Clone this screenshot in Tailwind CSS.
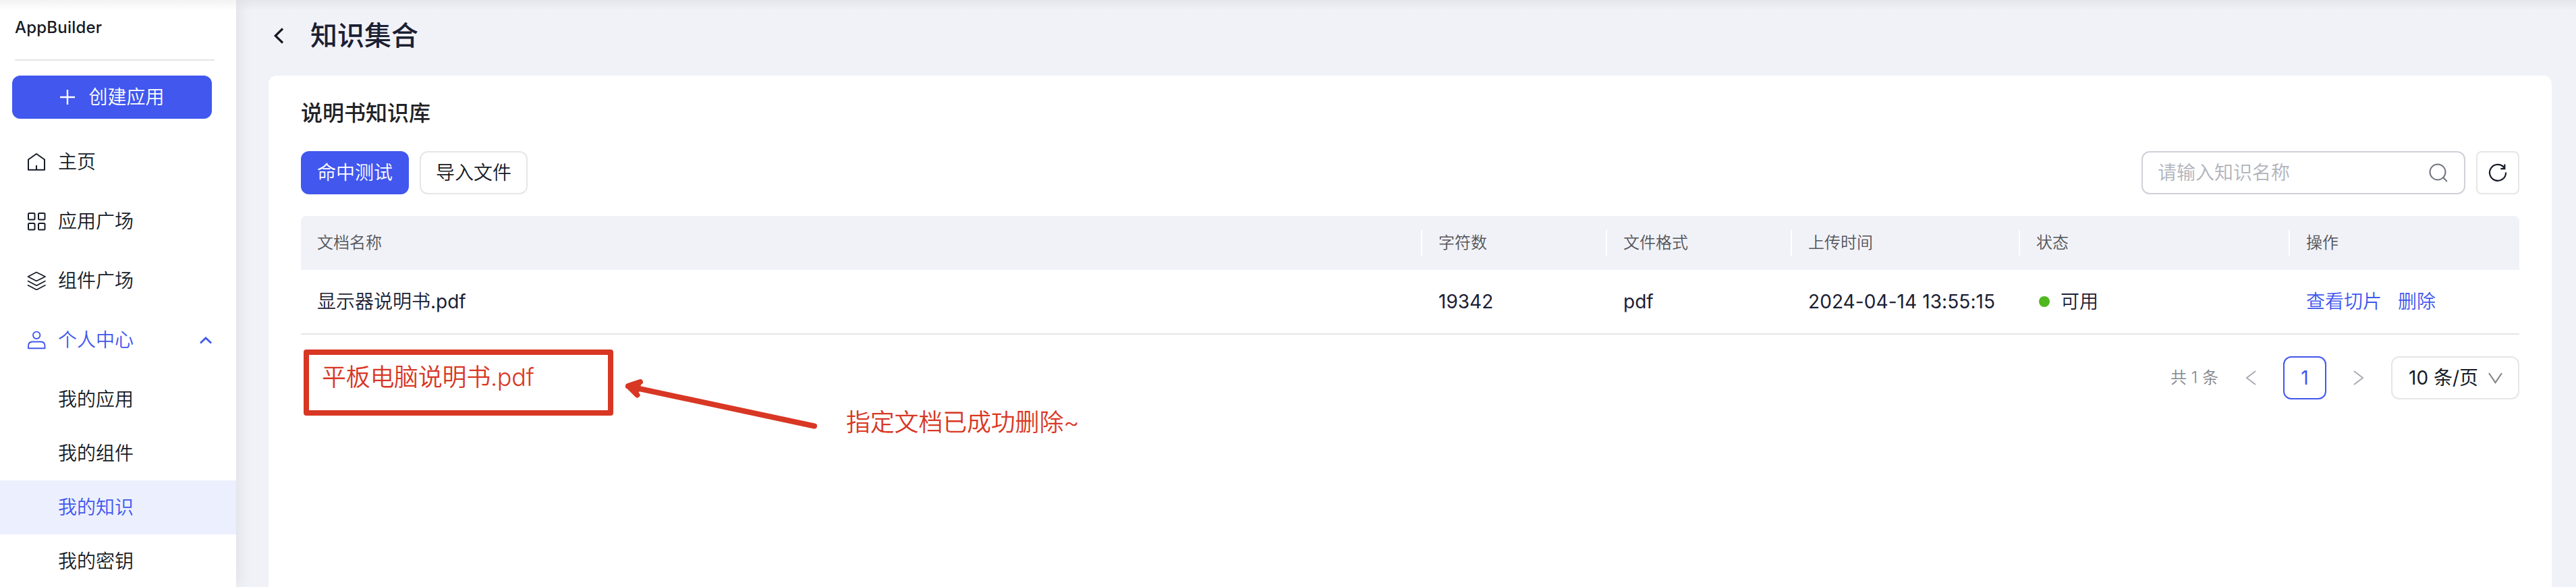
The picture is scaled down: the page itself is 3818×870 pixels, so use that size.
<!DOCTYPE html>
<html lang="zh-CN">
<head>
<meta charset="utf-8">
<title>知识集合 - AppBuilder</title>
<script src="https://cdn.jsdelivr.net/npm/@tailwindcss/browser@4"></script>
</head>
<body class="relative flex h-[870px] w-[3818px] overflow-hidden bg-[#f1f2f8] font-['Inter','Noto_Sans_CJK_SC',sans-serif] text-[28px] leading-none font-[350] text-[#151b26]">

  <!-- Sidebar -->
  <aside class="z-10 flex h-[870px] w-[350px] shrink-0 flex-col overflow-hidden bg-white shadow-[0_0_24px_rgba(0,0,0,0.10)]">
    <div class="ml-[22px] flex h-[90px] w-[296px] shrink-0 items-center border-b-2 border-[#e5e5e5] pb-[6px] text-[24px] font-[450]"><span class="tracking-[0.2px]">AppBuilder</span></div>
    <button class="mt-[22px] ml-[18px] flex h-16 w-[296px] shrink-0 items-center justify-center gap-[19px] rounded-xl bg-[#4157ee] text-white">
      <svg class="size-6" viewBox="0 0 24 24" fill="none" stroke="currentColor" stroke-width="2.4"><path d="M12 1v22M1 12h22"/></svg>
      <span>创建应用</span>
    </button>
    <nav class="mt-5 flex flex-col">
      <a class="flex h-[88px] items-center gap-[18px] pl-10">
        <svg class="size-7" viewBox="0 0 28 28" fill="none" stroke="currentColor" stroke-width="2" stroke-linejoin="round"><path d="M2 10.500 14 2l12 8.500V25.700H2zM14 19v6.500"/></svg>
        <span>主页</span>
      </a>
      <a class="flex h-[88px] items-center gap-[18px] pl-10">
        <svg class="size-7" viewBox="0 0 28 28" fill="none" stroke="currentColor" stroke-width="2"><rect x="2" y="2" width="9.500" height="9.500" rx="1.500"/><rect x="17" y="2" width="9.500" height="9.500" rx="1.500"/><rect x="2" y="17" width="9.500" height="9.500" rx="1.500"/><rect x="17" y="17" width="9.500" height="9.500" rx="1.500"/></svg>
        <span>应用广场</span>
      </a>
      <a class="flex h-[88px] items-center gap-[18px] pl-10">
        <svg class="size-7" viewBox="0 0 28 28" fill="none" stroke="currentColor" stroke-width="1.700" stroke-linejoin="round"><path d="M1.500 8 14 1.500 27 8 14 14.500zM1 14.200l13.200 7L27.500 14.200M1 20.500l13.200 7L27.500 20.500"/></svg>
        <span>组件广场</span>
      </a>
      <a class="flex h-[88px] items-center gap-[18px] pl-10 text-[#4157ee]">
        <svg class="size-7" viewBox="0 0 28 28" fill="none" stroke="currentColor" stroke-width="1.900" stroke-linejoin="round"><circle cx="14.200" cy="6.800" r="5.200"/><path d="M2 26.300V23c0-4.400 2.600-6.500 6.500-6.500h11.500c3.900 0 6.500 2.100 6.500 6.500v3.300z"/></svg>
        <span>个人中心</span>
        <svg class="ml-[80px] h-5 w-[18px]" viewBox="0 0 18 20" fill="none" stroke="currentColor" stroke-width="2.800"><path d="M1 14.500 9 7l8 7.500"/></svg>
      </a>
      <div class="mt-1 flex flex-col">
        <a class="flex h-20 items-center pl-[86px]">我的应用</a>
        <a class="flex h-20 items-center pl-[86px]">我的组件</a>
        <a class="flex h-20 items-center bg-[#ecf0fe] pl-[86px] text-[#4157ee]">我的知识</a>
        <a class="flex h-20 items-center pl-[86px]">我的密钥</a>
      </div>
    </nav>
  </aside>

  <!-- Main area -->
  <main class="flex w-[3468px] flex-col pr-9 pl-12">
    <header class="flex h-[112px] shrink-0 items-center pb-[6px] pl-[6px]">
      <svg class="h-6 w-5" viewBox="0 0 20 24" fill="none" stroke="currentColor" stroke-width="3.200"><path d="M15 1.500 4.200 12 15 22.500"/></svg>
      <h1 class="ml-[36px] text-[40px] font-medium text-[#1b2033]">知识集合</h1>
    </header>

    <section class="flex h-[770px] flex-col rounded-t-xl bg-white px-12">
      <h2 class="flex h-[112px] shrink-0 items-center text-[32px] font-medium text-[#212226]">说明书知识库</h2>

      <div class="flex h-16 items-center gap-4">
        <button class="flex h-16 w-40 items-center justify-center rounded-xl bg-[#4157ee] text-white">命中测试</button>
        <button class="flex h-16 w-40 items-center justify-center rounded-xl border-2 border-[#e6e6e6]">导入文件</button>
        <div class="ml-auto flex h-16 w-[480px] items-center justify-between rounded-xl border-2 border-[#d0d1d8] pr-[24px] pl-[22px]">
          <span class="text-[#b1b3bb]">请输入知识名称</span>
          <svg class="size-7" viewBox="0 0 28 28" fill="none" stroke="#73767e" stroke-width="2"><circle cx="13" cy="13" r="11.500"/><path d="m21 21 5.800 6"/></svg>
        </div>
        <button class="flex size-16 items-center justify-center rounded-lg border-2 border-[#e6e6e6]">
          <svg class="size-7" viewBox="0 0 28 28" fill="none" stroke="currentColor" stroke-width="2.200"><path d="M26 13.500A12 12 0 1 1 23.500 6.500"/><path d="M24.300 1.500v6.600h-6"/></svg>
        </button>
      </div>

      <!-- Document table -->
      <div class="mt-8 grid h-20 shrink-0 grid-cols-[1662px_274px_274px_338px_400px_340px] items-center rounded-t-lg bg-[#f1f2f8] text-[24px] text-[#545558]">
        <div class="flex h-[38px] items-center border-r-2 border-white pl-6">文档名称</div>
        <div class="flex h-[38px] items-center border-r-2 border-white pl-6">字符数</div>
        <div class="flex h-[38px] items-center border-r-2 border-white pl-6">文件格式</div>
        <div class="flex h-[38px] items-center border-r-2 border-white pl-6">上传时间</div>
        <div class="flex h-[38px] items-center border-r-2 border-white pl-6">状态</div>
        <div class="flex h-[38px] items-center pl-6">操作</div>
      </div>
      <div class="grid h-24 shrink-0 grid-cols-[1662px_274px_274px_338px_400px_340px] items-center border-b-2 border-[#e5e5e7] text-[#1b2033]">
        <div class="pl-6">显示器说明书<span class="font-normal">.pdf</span></div>
        <div class="pl-6 font-normal">19342</div>
        <div class="pl-6 font-normal">pdf</div>
        <div class="pl-6 font-normal tracking-[0.08px] whitespace-nowrap">2024-04-14 13:55:15</div>
        <div class="flex items-center gap-4 pl-7"><span class="size-4 rounded-full bg-[#50b71f]"></span>可用</div>
        <div class="flex gap-6 pl-6 text-[#4157ee]"><a>查看切片</a><a>删除</a></div>
      </div>

      <!-- Pagination -->
      <div class="mt-8 flex h-16 items-center justify-end">
        <span class="mr-[40px] text-[24px] text-[#84868c]">共 1 条</span>
        <svg class="h-6 w-4" viewBox="0 0 16 24" fill="none" stroke="#a9abb3" stroke-width="2"><path d="M15 2 2 12l13 10"/></svg>
        <span class="mx-10 flex size-16 items-center justify-center rounded-xl border-2 border-[#4157ee] font-normal text-[#4157ee]">1</span>
        <svg class="h-6 w-4" viewBox="0 0 16 24" fill="none" stroke="#a9abb3" stroke-width="2"><path d="m1 2 13 10L1 22"/></svg>
        <div class="ml-10 flex h-16 w-[190px] items-center justify-between rounded-xl border-2 border-[#e6e6e6] pr-[23px] pl-6">
          <span class="font-normal whitespace-nowrap">10 条/页</span>
          <svg class="h-5 w-[21px]" viewBox="0 0 21 20" fill="none" stroke="#84868c" stroke-width="2.200"><path d="m1 3 9.500 14L20 3"/></svg>
        </div>
      </div>
    </section>
  </main>

  <!-- Soft shadow under the top edge -->
  <div class="absolute inset-x-0 top-0 z-20 h-4 bg-gradient-to-b from-black/5 to-transparent"></div>

  <!-- Red annotations laid over the page -->
  <div class="absolute top-[518px] left-[450px] flex h-[98px] w-[459px] items-center rounded-[4px] border-8 border-[#d83724] pb-[16px] pl-[19px] text-[36px] tracking-[-0.3px] text-[#d83724]">平板电脑说明书.pdf</div>
  <svg class="absolute top-[550px] left-[915px] h-[100px] w-[310px]" viewBox="915 550 310 100" fill="none" stroke="#d83724" stroke-width="8" stroke-linecap="round" stroke-linejoin="round"><path d="M931 572.500 1207 631.500M949 566 931 572 944.500 585.500M938 573l6 6 2-9z"/></svg>
  <div class="absolute top-[608px] left-[1254px] text-[36px] tracking-[-0.2px] whitespace-nowrap text-[#d83724]">指定文档已成功删除~</div>
</body>
</html>
